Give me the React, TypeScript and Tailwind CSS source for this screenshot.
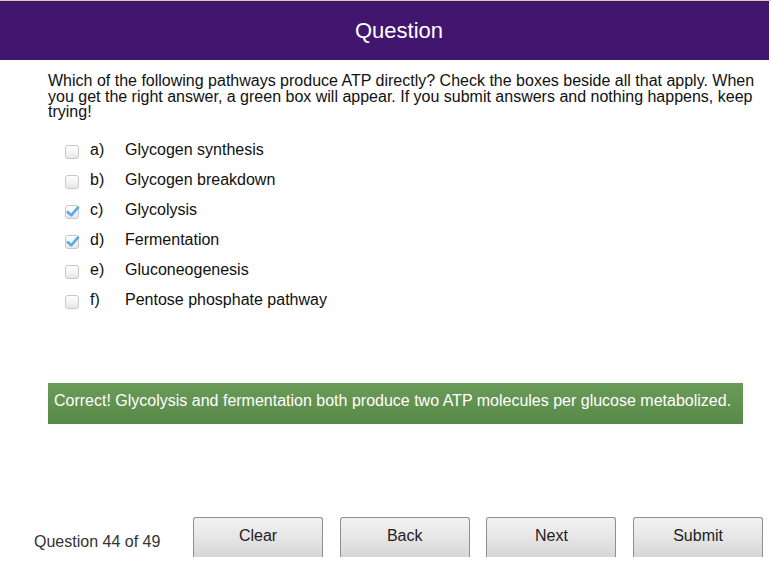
import React from "react";

const options = [
  { key: "a)", label: "Glycogen synthesis", checked: false },
  { key: "b)", label: "Glycogen breakdown", checked: false },
  { key: "c)", label: "Glycolysis", checked: true },
  { key: "d)", label: "Fermentation", checked: true },
  { key: "e)", label: "Gluconeogenesis", checked: false },
  { key: "f)", label: "Pentose phosphate pathway", checked: false },
];

function Checkbox({ checked }: { checked: boolean }) {
  return (
    <span className="relative block w-[14px] h-[14px] rounded-[3px] border border-[#c8c8c8] bg-gradient-to-b from-[#ffffff] to-[#e8e8e8]">
      {checked && (
        <svg
          viewBox="0 0 14 14"
          className="absolute left-[-1px] top-[-2px] w-[15px] h-[15px]"
        >
          <path
            d="M2.5 7.5 L5.8 10.6 L12.2 3.2"
            fill="none"
            stroke="#5aaae6"
            strokeWidth="2.4"
            strokeLinecap="round"
            strokeLinejoin="round"
          />
        </svg>
      )}
    </span>
  );
}

function NavButton({ label }: { label: string }) {
  return (
    <button className="w-[130px] h-[40px] rounded-t-[3px] border border-b-0 border-[#8f8f8f] bg-gradient-to-b from-[#f2f2f2] via-[#e6e6e6] to-[#d6d6d6] text-[16px] text-[#222] pb-[3px]">
      {label}
    </button>
  );
}

export default function App() {
  return (
    <div className="w-[771px] h-[563px] bg-white font-['Liberation_Sans',Arial,sans-serif] overflow-hidden flex flex-col">
      {/* Header */}
      <div className="border-t border-[#d6cbb4] pr-[2px]">
        <div className="h-[59px] bg-[#42166e] flex items-center justify-center pl-[29px]">
          <h1 className="text-[22px] text-white font-normal">Question</h1>
        </div>
      </div>

      {/* Prompt */}
      <p className="mt-[13px] ml-[48px] mr-[14px] text-[16px] leading-[15.5px] text-[#111]">
        Which of the following pathways produce ATP directly? Check the boxes
        beside all that apply. When you get the right answer, a green box will
        appear. If you submit answers and nothing happens, keep trying!
      </p>

      {/* Options */}
      <ul className="mt-[15px] ml-[65px] flex flex-col">
        {options.map((o) => (
          <li key={o.key} className="h-[30px] flex items-center text-[16px] text-[#111]">
            <span className="mt-[4px]">
              <Checkbox checked={o.checked} />
            </span>
            <span className="ml-[11px] w-[35px]">{o.key}</span>
            <span>{o.label}</span>
          </li>
        ))}
      </ul>

      {/* Feedback */}
      <div className="mt-[68px] ml-[48px] w-[695px] h-[41px] bg-gradient-to-b from-[#6b9b59] to-[#578948] flex items-center px-[6px] pb-[4px]">
        <span className="text-[16px] text-white">
          Correct! Glycolysis and fermentation both produce two ATP molecules
          per glucose metabolized.
        </span>
      </div>

      {/* Footer */}
      <div className="mt-auto flex items-end pb-[6px]">
        <span className="ml-[34px] mb-[3px] w-[159px] text-[16px] text-[#333]">
          Question 44 of 49
        </span>
        <div className="flex gap-[16.7px]">
          <NavButton label="Clear" />
          <NavButton label="Back" />
          <NavButton label="Next" />
          <NavButton label="Submit" />
        </div>
      </div>
    </div>
  );
}
